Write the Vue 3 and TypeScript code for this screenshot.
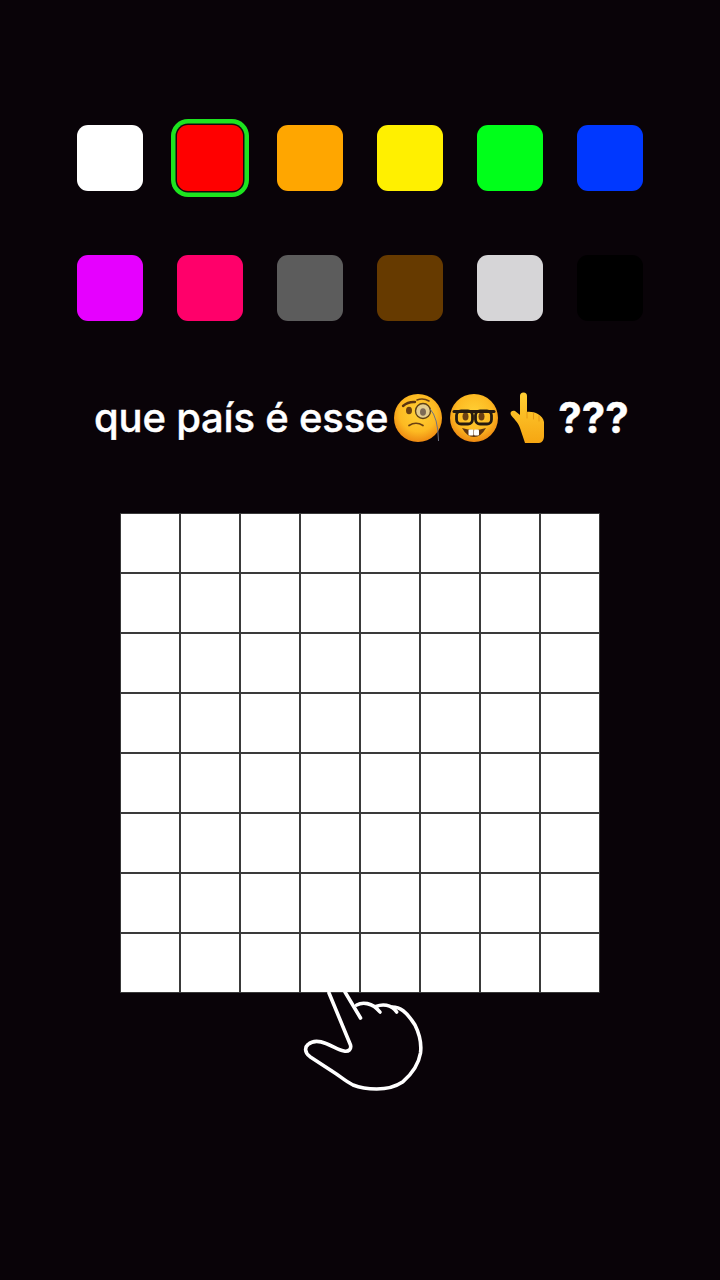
<script setup lang="ts">
const swatches: { color: string; selected?: boolean }[] = [
  { color: '#ffffff' },
  { color: '#ff0000', selected: true },
  { color: '#ffa600' },
  { color: '#fff000' },
  { color: '#00ff1a' },
  { color: '#0038ff' },
  { color: '#e600ff' },
  { color: '#ff006a' },
  { color: '#5c5c5c' },
  { color: '#663a00' },
  { color: '#d6d5d7' },
  { color: '#000000' },
]

const cells: number[] = Array.from({ length: 64 }, (_, i) => i)
</script>

<template>
  <main class="page">
    <div class="palette">
      <div
        v-for="s in swatches"
        :key="s.color"
        class="swatch"
        :class="{ selected: s.selected }"
        :style="{ backgroundColor: s.color }"
      ></div>
    </div>

    <div class="title">
      <span class="title-text">que país é esse</span>
      <svg class="emoji monocle" viewBox="0 0 48 48" width="48" height="48">
        <defs>
          <radialGradient id="face" cx="50%" cy="40%" r="62%">
            <stop offset="0%" stop-color="#ffd136" />
            <stop offset="62%" stop-color="#fdba22" />
            <stop offset="100%" stop-color="#ec8410" />
          </radialGradient>
        </defs>
        <circle cx="24" cy="24" r="24" fill="url(#face)" />
        <path d="M9 12 Q14 7.500 21 8" fill="none" stroke="#5a3410" stroke-width="2.400" stroke-linecap="round" />
        <ellipse cx="15" cy="16.500" rx="3" ry="3.800" fill="#6b4012" />
        <path d="M23 6 Q29 3.500 35 7" fill="none" stroke="#6b4012" stroke-width="1.600" stroke-linecap="round" />
        <circle cx="29" cy="17" r="7.500" fill="#e3cd8f" stroke="#5f4216" stroke-width="1.400" />
        <ellipse cx="29" cy="18" rx="3" ry="3.800" fill="#7d6a55" />
        <path d="M15 31.500 Q22 27 29 31.500" fill="none" stroke="#6b4012" stroke-width="1.700" stroke-linecap="round" />
        <path d="M36 15 Q44 23 44.500 47" fill="none" stroke="#6f7384" stroke-width="1" />
      </svg>
      <svg class="emoji nerd" viewBox="0 0 48 48" width="48" height="48">
        <circle cx="24" cy="24" r="24" fill="url(#face)" />
        <ellipse cx="15.500" cy="22.500" rx="3" ry="4" fill="#6b4012" />
        <ellipse cx="31.500" cy="22.500" rx="3" ry="4" fill="#6b4012" />
        <path d="M4 17.500 H44" stroke="#241a10" stroke-width="3" stroke-linecap="round" />
        <rect x="6.500" y="17" width="16" height="13" rx="4.500" fill="none" stroke="#241a10" stroke-width="2.800" />
        <rect x="25.500" y="17" width="16" height="13" rx="4.500" fill="none" stroke="#241a10" stroke-width="2.800" />
        <path d="M12 34 Q24 38 36 34 Q31 43 24 43 Q17 43 12 34 Z" fill="#5e3510" />
        <rect x="18.500" y="35.400" width="5" height="6" rx="1" fill="#ffffff" />
        <rect x="24" y="35.400" width="5" height="6" rx="1" fill="#ffffff" />
      </svg>
      <svg class="emoji finger" viewBox="0 0 34 51" width="34" height="51">
        <defs>
          <linearGradient id="skin" x1="0" y1="0" x2="0" y2="1">
            <stop offset="0%" stop-color="#ffcf33" />
            <stop offset="100%" stop-color="#f6a612" />
          </linearGradient>
        </defs>
        <path
          d="M10 4 a3.500 3.500 0 0 1 7 0 V20 C22 19 33 22 34 30 V44 C34 48 32 51 29 51 H15 C13.500 46 12 42 10 36 C8 30 3 26 1 23 C-0.500 20 2 18 5 19 L10 23 Z"
          fill="url(#skin)"
        />
        <path d="M17 20 V26 M23.500 21.500 V27 M29 24 V29" fill="none" stroke="#e08f10" stroke-width="0.800" stroke-linecap="round" />
      </svg>
      <span class="title-text marks">???</span>
    </div>

    <div class="board-wrap">
      <div class="board">
        <div v-for="c in cells" :key="c" class="cell"></div>
      </div>
      <svg class="hand" viewBox="300 990 130 105" width="130" height="105">
        <g fill="none" stroke="#ffffff" stroke-width="3.600" stroke-linecap="round" stroke-linejoin="round">
          <path d="M345 992 L360.500 1018" />
          <path d="M356.700 1005 C362 1002 372 1002 380 1012" />
          <path d="M376 1006.500 C382 1004 391 1004 396.700 1012" />
          <path
            d="M392 1007 C400 1007 406 1011 415 1025 C420 1035 421.500 1045 420.500 1053 C419 1062 414 1072 403 1081.700 C395 1087 385 1089 376.700 1089 C367 1089 358 1087 353 1085 C345 1081 340 1076 333 1071.700 L310 1056.700 C304 1052 305 1047 308 1044.500 C313 1040 320 1041 326 1043.500 C333 1046 338 1050 344 1051 C349 1052 351.500 1049 350.500 1045 L329 993"
          />
        </g>
      </svg>
    </div>
  </main>
</template>

<style scoped>
.page {
  box-sizing: border-box;
  width: 720px;
  height: 1280px;
  padding-top: 125px;
  overflow: hidden;
  background: #090308;
}

.palette {
  display: grid;
  grid-template-columns: repeat(6, 66px);
  grid-auto-rows: 66px;
  column-gap: 34px;
  row-gap: 64px;
  margin-left: 77px;
}

.swatch {
  border-radius: 11px;
}

.swatch.selected {
  box-shadow: 0 0 0 1.500px #140a0c, 0 0 0 6px #1de41f;
}

.title {
  display: flex;
  align-items: center;
  height: 51px;
  margin-top: 71px;
  margin-left: 94px;
}

.title-text {
  font-family: Inter, "Liberation Sans", sans-serif;
  font-size: 40px;
  font-weight: 500;
  letter-spacing: -0.2px;
  line-height: 51px;
  color: #ffffff;
  -webkit-text-stroke: 0.4px #ffffff;
}

.emoji {
  flex: none;
}

.monocle {
  margin-left: 6px;
}

.nerd {
  margin-left: 8px;
}

.finger {
  margin-left: 12px;
}

.marks {
  margin-left: 14px;
  font-weight: 700;
  font-size: 42px;
  letter-spacing: 0;
}

.board-wrap {
  position: relative;
  width: 480px;
  margin: 70px auto 0;
}

.board {
  box-sizing: border-box;
  display: grid;
  grid-template-columns: repeat(8, 58px);
  grid-template-rows: repeat(8, 58px);
  gap: 2px;
  padding: 1px;
  background: #3a3a3a;
}

.cell {
  background: #ffffff;
}

.hand {
  position: absolute;
  left: 180px;
  top: 477px;
}
</style>

<style>
body {
  background: #090308;
}
</style>
